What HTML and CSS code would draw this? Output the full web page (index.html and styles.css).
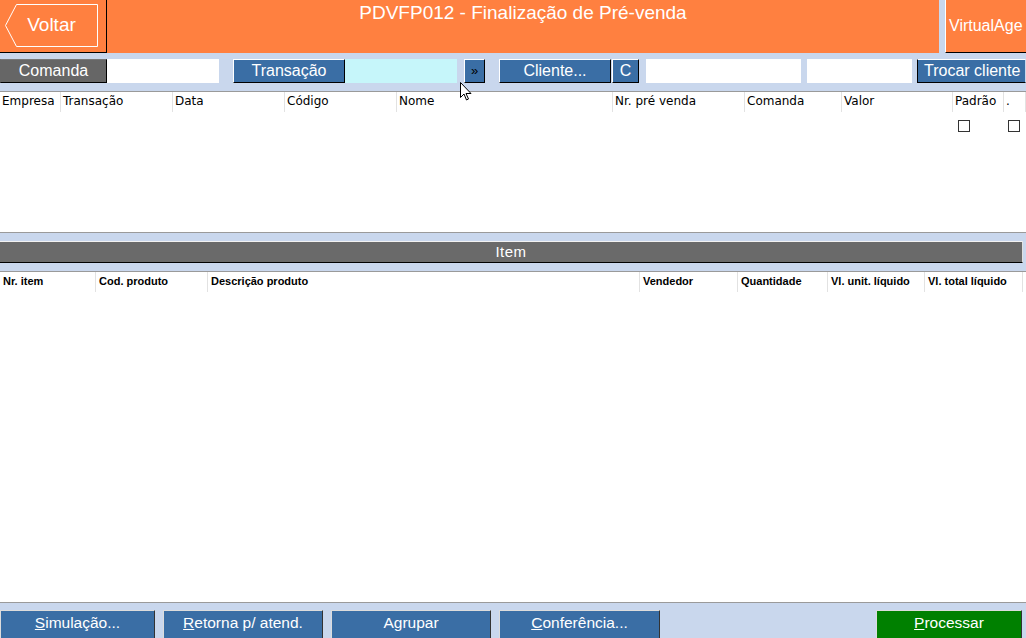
FILE: index.html
```html
<!DOCTYPE html>
<html lang="pt-BR">
<head>
    <meta charset="UTF-8">
    <title>PDVFP012 - Finalização de Pré-venda</title>
    <link rel="stylesheet" href="styles.css">
</head>
<body>

<div class="screen">

    <div class="topbar">
        <div class="back-box">
            <div class="back-btn">
                <svg width="93" height="43" viewBox="0 0 93 43">
                    <polygon points="11.5,0.5 92.5,0.5 92.5,42.5 11.5,42.5 0.5,21.5" fill="none" stroke="#fff" stroke-width="1"/>
                </svg>
                <span class="back-label">Voltar</span>
            </div>
        </div>
        <div class="title">PDVFP012 - Finalização de Pré-venda</div>
        <div class="brand">VirtualAge</div>
    </div>

    <div class="toolbar">
        <span class="tb-btn tb-gray w-comanda">Comanda</span>
        <span class="field w-112"></span>
        <span class="tb-btn w-transacao">Transação</span>
        <span class="field field-cyan w-112"></span>
        <span class="tb-btn tb-small w-next">»</span>
        <span class="tb-btn w-cliente">Cliente...</span>
        <span class="tb-btn w-c">C</span>
        <span class="field w-nome"></span>
        <span class="field w-doc"></span>
        <span class="tb-btn tb-trocar">Trocar cliente</span>
    </div>

    <div class="grid grid-top">
        <div class="th">Empresa</div>
        <div class="th">Transação</div>
        <div class="th">Data</div>
        <div class="th">Código</div>
        <div class="th">Nome</div>
        <div class="th">Nr. pré venda</div>
        <div class="th">Comanda</div>
        <div class="th">Valor</div>
        <div class="th">Padrão</div>
        <div class="th">.</div>
        <span class="check check-a"></span>
        <span class="check check-b"></span>
    </div>

    <div class="section">
        <div class="section-title">Item</div>
    </div>

    <div class="grid grid-items">
        <div class="th">Nr. item</div>
        <div class="th">Cod. produto</div>
        <div class="th">Descrição produto</div>
        <div class="th">Vendedor</div>
        <div class="th">Quantidade</div>
        <div class="th">Vl. unit. líquido</div>
        <div class="th">Vl. total líquido</div>
        <div class="th th-last"></div>
    </div>

    <div class="actions">
        <span class="act-btn w-sim"><u>S</u>imulação...</span>
        <span class="act-btn w-ret"><u>R</u>etorna p/ atend.</span>
        <span class="act-btn w-agr">Agrupar</span>
        <span class="act-btn w-conf"><u>C</u>onferência...</span>
        <span class="act-btn act-green w-proc"><u>P</u>rocessar</span>
    </div>

    <!-- ponteiro do mouse -->
    <svg class="cursor" width="13" height="20" viewBox="0 0 13 20">
        <path d="M0.5 0.5 L0.5 15.5 L4 12 L6.5 18 L8.5 17 L6 11.5 L11 11.5 Z" fill="#fff" stroke="#000" stroke-width="1"/>
    </svg>

</div>

</body>
</html>
```

FILE: styles.css
```css
* {
    box-sizing: border-box;
}

body {
    margin: 0;
    font-family: "Liberation Sans", Arial, sans-serif;
    background-color: #c9d7ed;
}

.screen {
    position: relative;
    height: 638px;
    display: flex;
    flex-direction: column;
    overflow: hidden;
}

/* cabeçalho */
.topbar {
    display: flex;
    height: 53px;
    flex-shrink: 0;
}

.back-box {
    width: 107px;
    background-color: #ff8040;
    border-right: 1px solid #000;
    border-bottom: 1px solid #000;
    padding: 4px 0 0 5px;
}

.back-btn {
    position: relative;
    width: 93px;
    height: 43px;
    display: flex;
    align-items: center;
    justify-content: center;
    color: #fff;
    font-size: 19px;
}

.back-btn svg {
    position: absolute;
    left: 0;
    top: 0;
}

.back-label {
    position: relative;
    padding-left: 0;
    padding-bottom: 1px;
}

.title {
    flex: 1;
    background-color: #ff8040;
    color: #fff;
    font-size: 19px;
    text-align: center;
    padding-top: 2px;
}

.brand {
    width: 81px;
    margin-left: 6px;
    background-color: #ff8040;
    border-left: 1px solid #fff;
    border-bottom: 1px solid #000;
    color: #fff;
    font-size: 16px;
    padding: 17px 0 0 3px;
    white-space: nowrap;
    overflow: hidden;
}

/* barra de filtros */
.toolbar {
    display: flex;
    height: 39px;
    flex-shrink: 0;
    padding-top: 6px;
    border-bottom: 1px solid #9a9a9a;
}

.tb-btn {
    height: 24px;
    display: flex;
    align-items: center;
    justify-content: center;
    color: #fff;
    font-size: 16px;
    background-color: #3a6ea5;
    border: 1px solid;
    border-color: #fff #000 #000 #fff;
    white-space: nowrap;
    overflow: hidden;
}

.tb-gray {
    background-color: #666;
    border-color: #777 #000 #000 #666;
}

.tb-small {
    color: #000;
    font-size: 13px;
    padding-bottom: 2px;
}

.tb-trocar {
    flex: 1;
    margin-left: 5px;
    justify-content: flex-start;
    padding-left: 6px;
    border-color: #fff #c9d7ed #000 #000;
}

.field {
    height: 24px;
    background-color: #fff;
}

.field-cyan {
    background-color: #c6f6fa;
}

.w-comanda { width: 107px; }
.w-112 { width: 112px; }
.w-transacao { width: 112px; margin-left: 14px; }
.w-next { width: 21px; margin-left: 7px; }
.w-cliente { width: 112px; margin-left: 14px; }
.w-c { width: 27px; margin-left: 1px; }
.w-nome { width: 155px; margin-left: 7px; }
.w-doc { width: 105px; margin-left: 6px; }

/* grades */
.grid {
    display: grid;
    align-content: start;
    background-color: #fff;
}

.th {
    height: 20px;
    line-height: 20px;
    padding-left: 3px;
    border-right: 1px solid #e2e2e2;
    white-space: nowrap;
    overflow: hidden;
    color: #000;
}

.grid-top {
    height: 141px;
    flex-shrink: 0;
    border-bottom: 1px solid #9a9a9a;
    grid-template-columns: 61px 112px 112px 112px 216px 132px 97px 111px 51px 1fr;
    grid-template-rows: 20px auto;
    font-family: "DejaVu Sans", Verdana, sans-serif;
    font-size: 12px;
}

.grid-top .th {
    padding-left: 2px;
    line-height: 18px;
}

.check {
    width: 12px;
    height: 12px;
    border: 1px solid #333;
    background-color: #fff;
    margin-top: 8px;
    grid-row: 2;
}

.check-a {
    grid-column: 9;
    margin-left: 5px;
}

.check-b {
    grid-column: 10;
    margin-left: 4px;
}

.section {
    height: 38px;
    flex-shrink: 0;
    padding: 8px 3px 8px 0;
}

.section-title {
    height: 22px;
    background-color: #6a6a6a;
    border-top: 1px solid #f2f2f2;
    border-right: 1px solid #e0e0e0;
    border-bottom: 1px solid #000;
    color: #fff;
    font-size: 15px;
    letter-spacing: 0.5px;
    line-height: 20px;
    text-align: center;
}

.grid-items {
    flex: 1;
    border-top: 1px solid #9a9a9a;
    border-bottom: 1px solid #9a9a9a;
    grid-template-columns: 96px 112px 432px 98px 90px 97px 98px 1fr;
    grid-template-rows: 20px;
    font-size: 11px;
    font-weight: bold;
}

.grid-items .th {
    padding-left: 3px;
    line-height: 18px;
}

.th-last {
    border-right: none;
}

/* botões de ação */
.actions {
    display: flex;
    height: 35px;
    flex-shrink: 0;
    padding-top: 7px;
    overflow: hidden;
}

.act-btn {
    height: 30px;
    display: flex;
    align-items: center;
    justify-content: center;
    padding-bottom: 4px;
    color: #fff;
    font-size: 15.5px;
    background-color: #3a6ea5;
    border: 1px solid;
    border-color: #dcdcdc #333 #333 #dcdcdc;
    white-space: nowrap;
}

.act-green {
    background-color: #008000;
}

.w-sim { width: 155px; }
.w-ret { width: 160px; margin-left: 8px; }
.w-agr { width: 160px; margin-left: 8px; }
.w-conf { width: 161px; margin-left: 8px; }
.w-proc { width: 146px; margin-left: auto; margin-right: 4px; }

.cursor {
    position: absolute;
    left: 460px;
    top: 82px;
}
```
